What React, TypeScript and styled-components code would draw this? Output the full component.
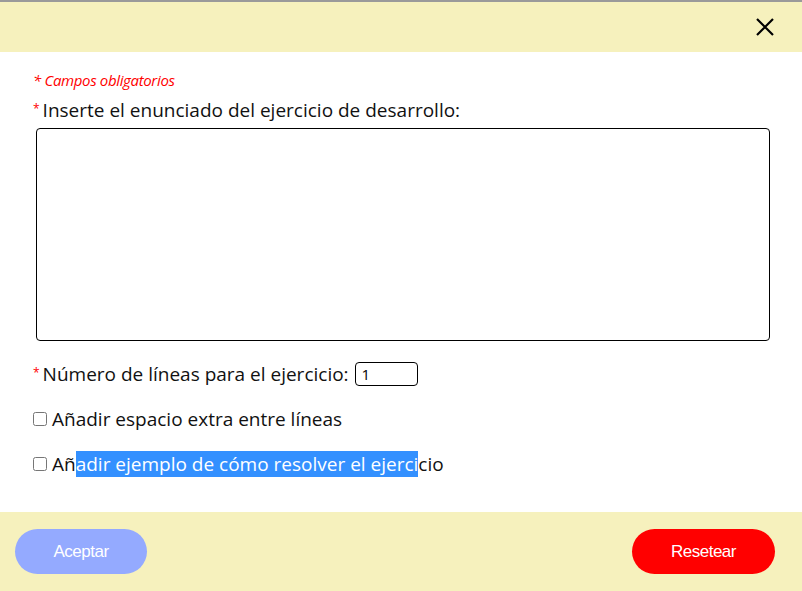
import React from 'react';
import styled, {createGlobalStyle} from 'styled-components';

const colors = {
    yellow: '#f6f1bd',
    red: '#ff0000',
    blue: '#94aaff',
    select: '#3390ff',
    text: '#111111',
};

const GlobalStyle = createGlobalStyle`
  html, body {
    margin: 0;
    padding: 0;
    background: #ffffff;
  }
  body {
    font-family: "Open Sans", "Noto Sans", sans-serif;
    color: ${colors.text};
  }
`;

const Modal = styled.div`
  width: 802px;
  height: 591px;
  display: flex;
  flex-direction: column;
  border-top: 2px solid #9a9a9a;
  box-sizing: border-box;
`;

const Header = styled.div`
  height: 50px;
  background: ${colors.yellow};
  display: flex;
  align-items: center;
  justify-content: flex-end;
  padding-right: 27px;
`;

const CloseButton = styled.button`
  border: none;
  background: transparent;
  padding: 0;
  width: 20px;
  height: 20px;
  display: flex;
  align-items: center;
  justify-content: center;
  cursor: pointer;
`;

const Body = styled.div`
  flex: 1;
  padding: 18px 32px 0 33px;
  display: flex;
  flex-direction: column;
`;

const Required = styled.p`
  margin: 0;
  color: ${colors.red};
  font-style: italic;
  font-size: 15px;
  line-height: 20px;
  letter-spacing: -0.35px;
`;

const Star = styled.span`
  color: ${colors.red};
  font-size: 12px;
  margin-right: 3px;
  position: relative;
  top: -1px;
`;

const Label = styled.label`
  display: flex;
  align-items: center;
  font-size: 19px;
  line-height: 26px;
`;

const TopLabel = styled(Label)`
  margin-top: 7px;
`;

const TextArea = styled.textarea`
  margin: 5px 0 0 3px;
  width: 734px;
  height: 213px;
  box-sizing: border-box;
  border: 1px solid #000;
  border-radius: 4px;
  resize: none;
  outline: none;
`;

const LineRow = styled(Label)`
  margin-top: 20px;
`;

const NumberInput = styled.input`
  margin-left: 6px;
  width: 63px;
  height: 24px;
  box-sizing: border-box;
  border: 1px solid #000;
  border-radius: 4px;
  padding: 0 6px;
  font-family: "Open Sans", sans-serif;
  font-size: 15px;
  outline: none;
`;

const CheckRow = styled(Label)<{$gap: number}>`
  margin-top: ${(p) => p.$gap}px;
`;

const Check = styled.input`
  margin: 0 5px 0 0;
  width: 14px;
  height: 14px;
`;

const Selected = styled.span`
  background: ${colors.select};
  color: #fff;
`;

const Footer = styled.div`
  height: 79px;
  background: ${colors.yellow};
  display: flex;
  align-items: center;
  justify-content: space-between;
  padding: 0 27px 0 15px;
`;

const ActionButton = styled.button<{$bg: string; $w: number}>`
  width: ${(p) => p.$w}px;
  height: 45px;
  border: none;
  border-radius: 23px;
  background: ${(p) => p.$bg};
  color: #fff;
  font-family: "Liberation Sans", Arial, sans-serif;
  font-size: 17px;
  letter-spacing: -0.5px;
  cursor: pointer;
`;

const App = () => {
    return (
        <>
            <GlobalStyle/>
            <Modal>
                <Header>
                    <CloseButton aria-label="Cerrar">
                        <svg width="18" height="18" viewBox="0 0 18 18">
                            <path d="M1 1L17 17M17 1L1 17" stroke="#000" strokeWidth="2.2" fill="none"/>
                        </svg>
                    </CloseButton>
                </Header>
                <Body>
                    <Required>* Campos obligatorios</Required>
                    <TopLabel><Star>*</Star>Inserte el enunciado del ejercicio de desarrollo:</TopLabel>
                    <TextArea/>
                    <LineRow>
                        <Star>*</Star>Número de líneas para el ejercicio:
                        <NumberInput type="text" defaultValue="1"/>
                    </LineRow>
                    <CheckRow $gap={19}>
                        <Check type="checkbox"/>Añadir espacio extra entre líneas
                    </CheckRow>
                    <CheckRow $gap={19}>
                        <Check type="checkbox"/>Añ<Selected>adir ejemplo de cómo resolver el ejerci</Selected>cio
                    </CheckRow>
                </Body>
                <Footer>
                    <ActionButton $bg={colors.blue} $w={132}>Aceptar</ActionButton>
                    <ActionButton $bg={colors.red} $w={143}>Resetear</ActionButton>
                </Footer>
            </Modal>
        </>
    );
};

export default App;
